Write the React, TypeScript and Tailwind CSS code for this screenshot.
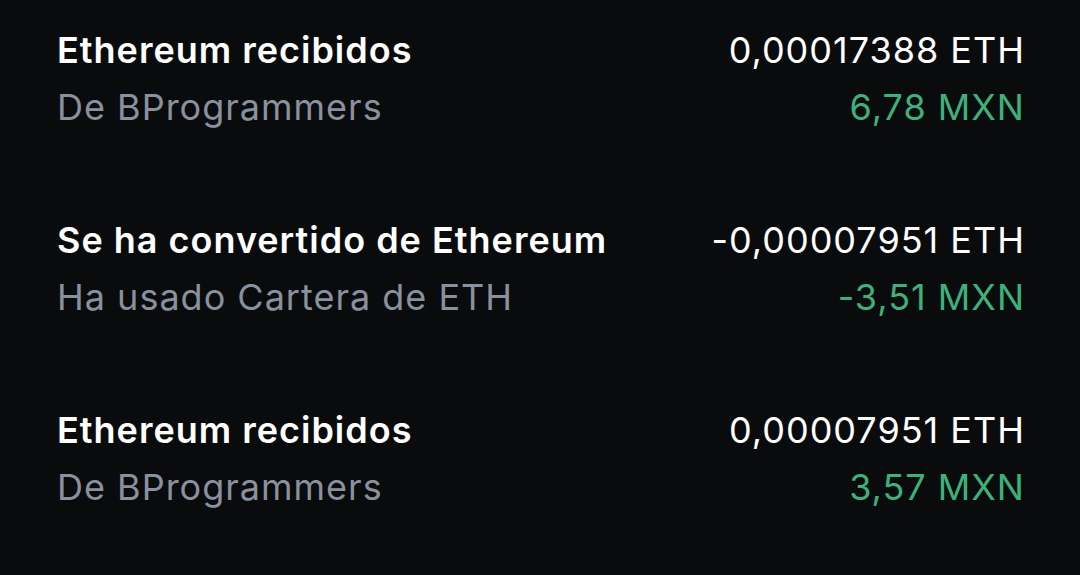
const rows = [
  { title: 'Ethereum recibidos', sub: 'De BProgrammers', amount: '0,00017388 ETH', fiat: '6,78 MXN' },
  { title: 'Se ha convertido de Ethereum', sub: 'Ha usado Cartera de ETH', amount: '-0,00007951 ETH', fiat: '-3,51 MXN' },
  { title: 'Ethereum recibidos', sub: 'De BProgrammers', amount: '0,00007951 ETH', fiat: '3,57 MXN' },
];

export default function App() {
  return (
    <div className="w-[1080px] h-[575px] bg-[#0a0b0d] overflow-hidden font-['Inter',sans-serif]">
      <div className="flex flex-col gap-[89px] pl-[57px] pr-[55px] pt-[28px]">
        {rows.map((r, i) => (
          <div key={i} className="flex justify-between">
            <div className="flex flex-col gap-[13px]">
              <span className="text-[36px] leading-[44px] font-semibold tracking-[1px] text-white">{r.title}</span>
              <span className="text-[36px] leading-[44px] tracking-[1px] text-[#8a919e]">{r.sub}</span>
            </div>
            <div className="flex flex-col gap-[13px] items-end">
              <span className="text-[36px] leading-[44px] tracking-[1px] text-white">{r.amount}</span>
              <span className="text-[36px] leading-[44px] tracking-[1px] text-[#3eb07a]">{r.fiat}</span>
            </div>
          </div>
        ))}
      </div>
    </div>
  );
}
